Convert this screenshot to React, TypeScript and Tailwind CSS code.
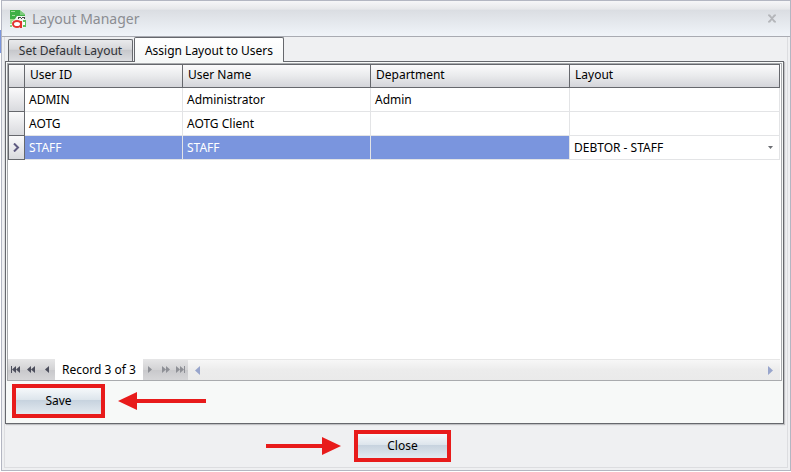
import clsx from "clsx";

const users = [
  { id: "ADMIN", name: "Administrator", department: "Admin", layout: "" },
  { id: "AOTG", name: "AOTG Client", department: "", layout: "" },
  { id: "STAFF", name: "STAFF", department: "", layout: "DEBTOR - STAFF" },
];

const selectedId = "STAFF";

const AppIcon = () => (
  <svg width="18" height="20" viewBox="0 0 18 20" className="shrink-0" aria-hidden="true">
    <path d="M1 1h11l4 4v14H1z" fill="#f1f6f1" />
    <path d="M1 1h10v5h5v1H8L6 10H1z" fill="#3fb045" />
    <path d="M2 2h4v1H2zM3 6h3v1H3z" fill="#a5dd9c" />
    <path d="M11 1l5 4v1h-5z" fill="#7cc97c" />
    <path d="M1 10h5l-2 2H1zM1 12h2v3H1z" fill="#9ede8a" />
    <path d="M9 8h3v1H9zM13 8h3v1h-3zM9 9h1v1H9zM12 9h1v1h-1zM15 9h1v1h-1z" fill="#444" />
    <path d="M14 11h3v7h-3z" fill="#5fbe5c" />
    <path d="M1 16h2v2H1z" fill="#8bd185" />
    <ellipse cx="8" cy="15" rx="4" ry="3" fill="#fff" stroke="#e3342f" strokeWidth="2" />
    <path d="M12 12v7" fill="none" stroke="#e3342f" strokeWidth="2" />
    <path d="M14 13h2v3h-2z" fill="#fff" />
  </svg>
);

const ArrowLine = ({ length, flip }: { length: number; flip?: boolean }) => (
  <svg width={length} height="20" viewBox={`0 0 ${length} 20`} className={clsx("shrink-0", flip && "rotate-180")} aria-hidden="true">
    <path d={`M0 8h${length - 19}V1L${length} 10L${length - 19} 19V12H0z`} fill="#e81b1b" />
  </svg>
);

const navPaths: Record<string, string> = {
  First: "M0 0h1v7H0zM5 0v7L1 3.500zM9 0v7L5 3.500z",
  "Previous page": "M4 0v7L0 3.500zM8 0v7L4 3.500z",
  Previous: "M6 0v7L2 3.500z",
  Next: "M2 0v7L6 3.500z",
  "Next page": "M1 0v7L5 3.500zM5 0v7L9 3.500z",
  Last: "M0 0v7L4 3.500zM4 0v7L8 3.500zM8 0h1v7H8z",
};

const NavButton = ({ label, disabled }: { label: string; disabled?: boolean }) => (
  <button type="button" aria-label={label} disabled={disabled} className="flex h-full flex-1 items-center justify-center">
    <svg width="9" height="7" viewBox="0 0 9 7" aria-hidden="true">
      <path d={navPaths[label]} fill={disabled ? "#8e9096" : "#4c4e5c"} />
    </svg>
  </button>
);

const ActionButton = ({ label, className }: { label: string; className: string }) => (
  <button
    type="button"
    className={clsx(
      "border-4 border-[#e81b1b] bg-[linear-gradient(#f6f9fb,#dde5ec_45%,#c6d2de_46%,#e3eaf0)] text-xs",
      className
    )}
  >
    {label}
  </button>
);

const TitleBar = () => (
  <header className="flex h-9 shrink-0 items-center gap-[5px] border-b border-[#a9abb2] bg-[linear-gradient(#f6f6f8,#e6e7ea_24%,#dadde2_25%,#f0f4f9)] pl-[7px] pr-[10px]">
    <AppIcon />
    <h1 className="flex-1 text-sm text-[#8b8d92]">Layout Manager</h1>
    <button type="button" aria-label="Close window" className="flex h-4 w-4 items-center justify-center">
      <svg width="10" height="9" viewBox="0 0 10 9" aria-hidden="true">
        <path d="M1 0.500h2l2 2.500l2-2.500h2v1l-3 3l3 3v1h-2l-2-2.500l-2 2.500h-2v-1l3-3l-3-3z" fill="#b4b6ba" />
      </svg>
    </button>
  </header>
);

const Tabs = () => (
  <div role="tablist" className="flex shrink-0 items-end gap-px pl-[3px]">
    <button
      type="button"
      role="tab"
      aria-selected="false"
      className="h-[22px] w-[125px] rounded-t-xs border border-b-0 border-[#66686d] bg-[linear-gradient(#e9eaec,#d6d7da_45%,#c5c6ca_46%,#dcdde0)] pt-px text-xs text-[#303236]"
    >
      Set Default Layout
    </button>
    <button
      type="button"
      role="tab"
      aria-selected="true"
      className="z-10 -mb-px h-[25px] w-[150px] rounded-t-xs border border-b-0 border-[#66686d] bg-[linear-gradient(#ffffff,#f5f7f7)] pt-px text-xs"
    >
      Assign Layout to Users
    </button>
  </div>
);

const headCell = "h-6 border-r border-y border-[#66686d] bg-[linear-gradient(#fbfbfc,#e9eaec_50%,#d4d5da)] pt-0 pb-[2px] pl-[5px] text-left font-normal";

const UserTable = () => (
  <table className="w-full table-fixed border-separate border-spacing-0 text-xs">
    <colgroup>
      <col className="w-[17px]" />
      <col className="w-[158px]" />
      <col className="w-[188px]" />
      <col className="w-[199px]" />
      <col />
    </colgroup>
    <thead>
      <tr>
        <th aria-label="Current row" className={clsx(headCell, "border-l")} />
        {["User ID", "User Name", "Department", "Layout"].map((label) => (
          <th key={label} className={headCell}>{label}</th>
        ))}
      </tr>
    </thead>
    <tbody>
      {users.map((user) => {
        const selected = user.id === selectedId;
        const cell = clsx("h-6 border-r border-b border-[#e3e4e6] py-0 pl-1", selected && "bg-[#7a95de] text-white");
        return (
          <tr key={user.id}>
            <td className="h-6 border-x border-b border-[#66686d] bg-[linear-gradient(#fafafb,#d9dade)] p-0">
              {selected && (
                <svg width="7" height="9" viewBox="0 0 7 9" className="mx-auto" aria-hidden="true">
                  <path d="M1 0.500l4 4l-4 4" fill="none" stroke="#5e5a80" strokeWidth="2" />
                </svg>
              )}
            </td>
            <td className={cell}>{user.id}</td>
            <td className={cell}>{user.name}</td>
            <td className={cell}>{user.department}</td>
            <td className="h-6 border-r border-b border-[#e3e4e6] p-0">
              {selected && (
                <div className="relative flex items-center">
                  <select aria-label="Layout" defaultValue={user.layout} className="w-full appearance-none bg-transparent pl-1 outline-none">
                    <option>{user.layout}</option>
                  </select>
                  <svg width="5" height="3" viewBox="0 0 5 3" className="pointer-events-none absolute right-[6px]" aria-hidden="true">
                    <path d="M0 0h5L2.500 3z" fill="#6c6e73" />
                  </svg>
                </div>
              )}
            </td>
          </tr>
        );
      })}
    </tbody>
  </table>
);

const navBar = "flex h-full items-center bg-[linear-gradient(#e6e6e7,#d3d3d5_50%,#c8c8cb_51%,#d6d6d8)]";

const RecordBar = () => (
  <div className="flex h-[21px] shrink-0 items-center text-xs">
    <div className={clsx(navBar, "w-[47px]")}>
      <NavButton label="First" />
      <NavButton label="Previous page" />
      <NavButton label="Previous" />
    </div>
    <span className="w-[88px] text-center">Record 3 of 3</span>
    <div className={clsx(navBar, "w-[45px]")}>
      <NavButton label="Next" disabled />
      <NavButton label="Next page" disabled />
      <NavButton label="Last" disabled />
    </div>
    <div className="flex h-full flex-1 items-center justify-between border-t border-[#e6e6e6] bg-[linear-gradient(#f7f7f7,#ececec_50%,#eaeaea)] px-[7px]">
      <button type="button" aria-label="Scroll left">
        <svg width="5" height="9" viewBox="0 0 5 9" className="block" aria-hidden="true">
          <path d="M5 0v9L0 4.500z" fill="#98a5cc" />
        </svg>
      </button>
      <button type="button" aria-label="Scroll right">
        <svg width="5" height="9" viewBox="0 0 5 9" className="block" aria-hidden="true">
          <path d="M0 0v9L5 4.500z" fill="#98a5cc" />
        </svg>
      </button>
    </div>
  </div>
);

const App = () => {
  return (
    <div className="flex h-screen min-h-80 bg-white pb-px font-['Noto_Sans',sans-serif] text-black">
      <div className="w-px shrink-0 bg-[linear-gradient(#fff_30px,#7a95de_30px,#7a95de_53px,#fff_53px)]" />
      <div className="flex min-w-0 flex-1 flex-col border border-[#b3b6c2] bg-[#eff0f2]">
        <TitleBar />
        <main className="mx-[2px] mb-[2px] flex min-h-0 flex-1 flex-col border border-t-0 border-[#dcdde0] pr-[3px]">
          <Tabs />
          <section className="flex min-h-0 flex-1 flex-col border border-[#66686d] bg-[#f7f9f8] p-px shadow-[1px_1px_1px_#c0c1c4]">
            <div className="flex min-h-0 flex-1 flex-col border border-[#a9abae] bg-white pr-px">
              <div className="flex-1">
                <UserTable />
              </div>
              <RecordBar />
            </div>
            <div className="flex h-[41px] shrink-0 items-center gap-[13px] pl-[5px] pb-px">
              <ActionButton label="Save" className="h-[34px] w-[93px]" />
              <ArrowLine length={88} flip />
            </div>
          </section>
          <footer className="flex h-[43px] shrink-0 items-center justify-center pl-4">
            <div className="relative flex items-center">
              <div className="absolute right-full mr-[13px]">
                <ArrowLine length={75} />
              </div>
              <ActionButton label="Close" className="h-8 w-[97px]" />
            </div>
          </footer>
        </main>
      </div>
    </div>
  );
};

export default App;
